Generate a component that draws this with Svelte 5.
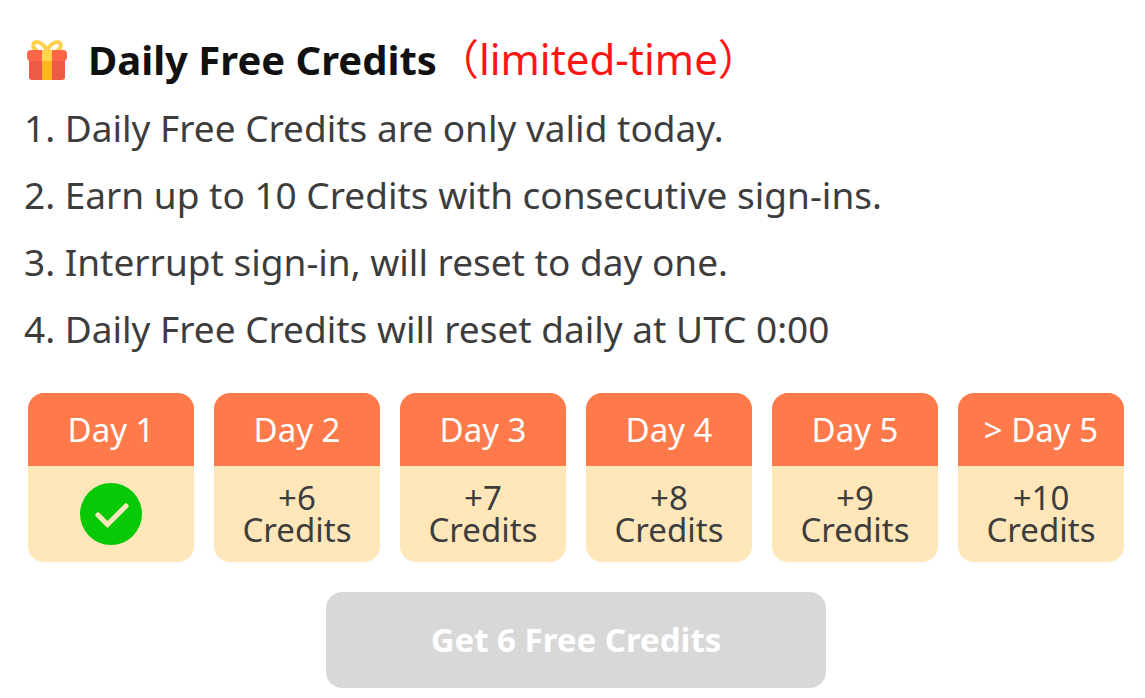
<script lang="ts">
  interface Day {
    label: string;
    credits: number;
    claimed?: boolean;
  }

  const rules = [
    'Daily Free Credits are only valid today.',
    'Earn up to 10 Credits with consecutive sign-ins.',
    'Interrupt sign-in, will reset to day one.',
    'Daily Free Credits will reset daily at UTC 0:00',
  ];

  const days: Day[] = [
    { label: 'Day 1', credits: 5, claimed: true },
    { label: 'Day 2', credits: 6 },
    { label: 'Day 3', credits: 7 },
    { label: 'Day 4', credits: 8 },
    { label: 'Day 5', credits: 9 },
    { label: '> Day 5', credits: 10 },
  ];

  // The next reward can't be claimed until the day rolls over.
  const nextReward = $derived(days.find((day) => !day.claimed)?.credits ?? 10);
</script>

<main class="daily-credits">
  <h1 class="title">
    <svg class="gift" viewBox="0 0 40 40" aria-hidden="true">
      <g fill="none" stroke="#ffd150" stroke-width="4">
        <path d="M20 11C18 5 13 2 9.500 2C5 2 5 8 10 11" />
        <path d="M20 11C22 5 27 2 30.500 2C35 2 35 8 30 11" />
      </g>
      <path fill="#eb5b46" d="M2 20h36v17a3 3 0 0 1-3 3H5a3 3 0 0 1-3-3z" />
      <rect width="40" height="11" y="10" fill="#ff6549" rx="4" />
      <path fill="#ffd64c" d="M15 10h10v11H15z" />
      <path fill="#fdb71e" d="M15 21h10v19H15z" />
    </svg>
    <span>Daily Free Credits<span class="limited">（limited-time）</span></span>
  </h1>

  <ol class="rules">
    {#each rules as rule, idx (idx)}
      <li>{idx + 1}. {rule}</li>
    {/each}
  </ol>

  <div class="sign-in">
    <ul class="days">
      {#each days as day (day.label)}
        <li class="day">
          <div class="day-label">{day.label}</div>
          <div class="day-reward">
            {#if day.claimed}
              <svg class="check" viewBox="0 0 62 62" role="img" aria-label="Claimed">
                <circle cx="31" cy="31" r="31" fill="#07c905" />
                <path
                  d="M18 32l9.500 9.500 18.500-18.500"
                  fill="none"
                  stroke="#ffe7ba"
                  stroke-width="5"
                  stroke-linecap="round"
                />
              </svg>
            {:else}
              <span>+{day.credits}<br />Credits</span>
            {/if}
          </div>
        </li>
      {/each}
    </ul>

    <button type="button" class="claim" disabled>Get {nextReward} Free Credits</button>
  </div>
</main>

<style>
  :global(body) {
    margin: 0;
    background: #ffffff;
  }

  .daily-credits {
    padding: 25px 21px 10px 24px;
    color: #3d3d3d;
    font-family: 'Segoe UI', 'Noto Sans', 'Noto Sans CJK SC', sans-serif;
  }

  .title {
    display: flex;
    align-items: center;
    gap: 21px;
    margin: 0;
    padding-left: 3px;
    color: #111111;
    font-size: 40px;
    font-weight: 700;
    line-height: 68px;
    white-space: nowrap;
  }

  .gift {
    width: 40px;
    height: 40px;
    flex: none;
  }

  .limited {
    color: #ff1414;
    font-size: 42px;
    font-weight: 400;
  }

  .rules {
    margin: 0 0 31px;
    padding: 0;
    list-style: none;
    font-size: 37px;
    line-height: 67px;
  }

  .sign-in {
    display: flex;
    flex-direction: column;
    align-items: center;
    gap: 30px;
    padding-left: 4px;
  }

  .days {
    display: grid;
    grid-template-columns: repeat(6, 1fr);
    gap: 20px;
    width: 100%;
    margin: 0;
    padding: 0;
    list-style: none;
    font-size: 33px;
    text-align: center;
  }

  .day {
    overflow: hidden;
    border-radius: 16px;
    background: #ffe7ba;
  }

  .day-label {
    background: #ff7a4a;
    color: #ffffff;
    line-height: 73px;
    white-space: nowrap;
  }

  .day-reward {
    display: flex;
    align-items: center;
    justify-content: center;
    min-height: 96px;
    line-height: 32px;
  }

  .check {
    width: 62px;
    height: 62px;
  }

  .claim {
    width: 500px;
    max-width: 100%;
    padding: 0;
    border: none;
    border-radius: 16px;
    background: #d8d8d8;
    color: #ffffff;
    font-family: inherit;
    font-size: 33px;
    font-weight: 700;
    line-height: 96px;
  }
</style>
